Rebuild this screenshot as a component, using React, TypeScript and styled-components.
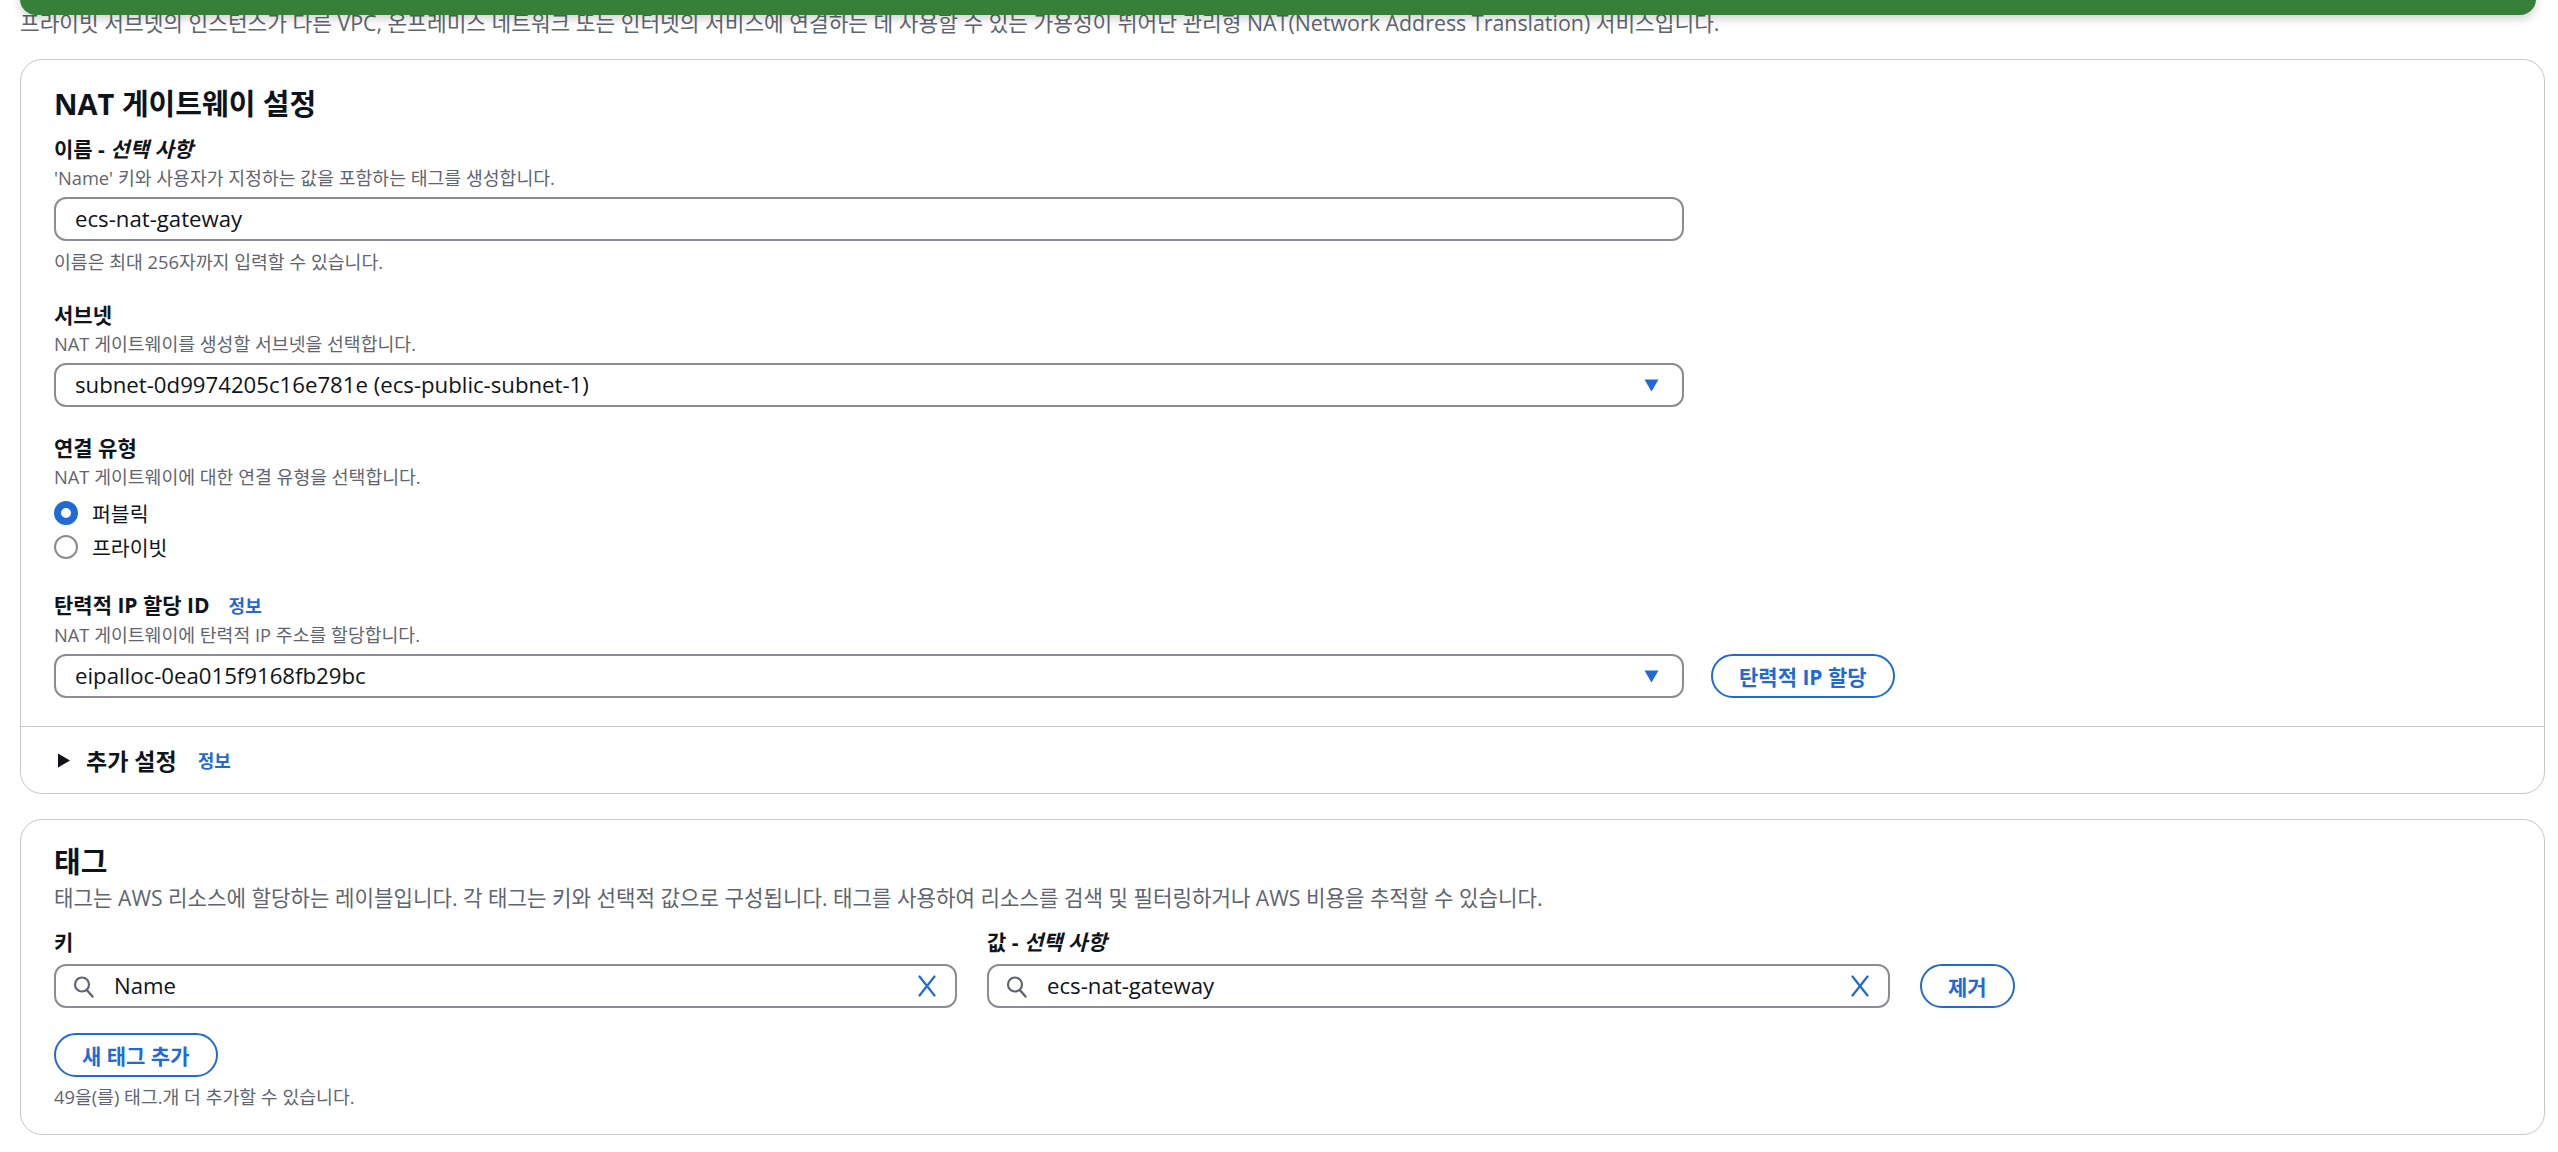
import React from "react";
import styled, { createGlobalStyle } from "styled-components";

const BLUE = "#1f6ad6";
const TEXT = "#0f141a";
const MUTED = "#5f6570";
const BORDER = "#8c8c94";
const LINE = "#c6c6cd";

const Global = createGlobalStyle`
  html, body { margin: 0; padding: 0; background: #ffffff; }
  body {
    font-family: "Open Sans", "Noto Sans CJK KR", sans-serif;
    color: ${TEXT};
  }
  * { box-sizing: border-box; }
`;

const Page = styled.div`
  position: relative;
  width: 2558px;
  height: 1152px;
  overflow: hidden;
  padding: 9px 13px 0 20px;
`;

const FlashBar = styled.div`
  position: absolute;
  top: -40px;
  left: 20px;
  right: 22px;
  height: 55px;
  background: #37803a;
  border-radius: 16px;
  box-shadow: 0 4px 10px rgba(0, 0, 0, 0.18);
`;

const PageDescription = styled.p`
  margin: 0;
  font-size: 21.4px;
  line-height: 28px;
  color: ${MUTED};
  white-space: nowrap;
`;

const Card = styled.section<{ $gap: number }>`
  margin-top: ${(p) => p.$gap}px;
  border: 1px solid ${LINE};
  border-radius: 22px;
  background: #fff;
  overflow: hidden;
`;

const CardBody = styled.div<{ $top: number; $bottom: number }>`
  padding: ${(p) => p.$top}px 33px ${(p) => p.$bottom}px 33px;
`;

const CardTitle = styled.h2`
  margin: 0;
  font-size: 29px;
  line-height: 34px;
  font-weight: 700;
  color: ${TEXT};
`;

const FieldStack = styled.div`
  margin-top: 15px;
  display: flex;
  flex-direction: column;
  gap: 28px;
`;

const Field = styled.div`
  display: flex;
  flex-direction: column;
`;

const Label = styled.div`
  display: flex;
  align-items: baseline;
  gap: 19px;
  font-size: 21px;
  line-height: 26px;
  font-weight: 700;
  color: ${TEXT};
  white-space: nowrap;
`;

const Optional = styled.i`
  font-style: italic;
`;

const InfoLink = styled.span`
  font-size: 18px;
  font-weight: 700;
  color: ${BLUE};
`;

const Description = styled.div`
  margin-top: 4px;
  font-size: 18.3px;
  line-height: 24px;
  color: ${MUTED};
  white-space: nowrap;
`;

const Constraint = styled.div`
  margin-top: 9px;
  font-size: 18.3px;
  line-height: 24px;
  color: ${MUTED};
`;

const ControlRow = styled.div`
  margin-top: 7px;
  display: flex;
  align-items: center;
  gap: 27px;
`;

const Box = styled.div<{ $width?: number }>`
  width: ${(p) => (p.$width ? `${p.$width}px` : "100%")};
  height: 44px;
  border: 2px solid ${BORDER};
  border-radius: 12px;
  background: #fff;
  display: flex;
  align-items: center;
  padding: 0 17px 0 19px;
`;

const SelectBox = styled(Box)`
  padding-right: 23px;
`;

const SearchBox = styled(Box)`
  padding-left: 17px;
  gap: 20px;
`;

const BoxValue = styled.span`
  flex: 1;
  font-family: "Open Sans", "Noto Sans CJK KR", sans-serif;
  font-size: 22.2px;
  line-height: 30px;
  color: ${TEXT};
  white-space: nowrap;
  overflow: hidden;
`;

const RadioGroup = styled.div`
  margin-top: 7px;
  display: flex;
  flex-direction: column;
`;

const RadioRow = styled.label`
  height: 34px;
  display: flex;
  align-items: center;
  gap: 14px;
  font-size: 20.5px;
  color: ${TEXT};
`;

const RadioDot = styled.span<{ $checked?: boolean }>`
  width: 24px;
  height: 24px;
  border-radius: 50%;
  flex: none;
  border: ${(p) => (p.$checked ? `7.5px solid ${BLUE}` : `2.5px solid ${BORDER}`)};
  background: #fff;
`;

const OutlineButton = styled.button`
  height: 44px;
  padding: 0 26px;
  border: 2px solid ${BLUE};
  border-radius: 22px;
  background: #fff;
  color: ${BLUE};
  font-family: "Open Sans", "Noto Sans CJK KR", sans-serif;
  font-size: 21px;
  font-weight: 700;
  white-space: nowrap;
  display: inline-flex;
  align-items: center;
  cursor: pointer;
`;

const Divider = styled.hr`
  margin: 0;
  border: 0;
  border-top: 1px solid ${LINE};
`;

const ExpandHeader = styled.div`
  height: 66px;
  padding-left: 36px;
  display: flex;
  align-items: center;
`;

const ExpandTitle = styled.span`
  margin-left: 15px;
  font-size: 23px;
  font-weight: 700;
  color: ${TEXT};
`;

const ExpandInfo = styled(InfoLink)`
  margin-left: 21px;
`;

const HeaderDescription = styled.p`
  margin: 5px 0 0 0;
  font-size: 21.2px;
  line-height: 28px;
  color: ${MUTED};
  white-space: nowrap;
`;

const TagGrid = styled.div`
  margin-top: 17px;
  display: grid;
  grid-template-columns: 903px 903px auto;
  column-gap: 30px;
  row-gap: 9px;
  justify-content: start;
  align-items: center;
`;

const TagFooter = styled.div`
  margin-top: 25px;
  display: flex;
  flex-direction: column;
  align-items: flex-start;
`;

const FooterNote = styled.div`
  margin-top: 8px;
  font-size: 18.3px;
  line-height: 24px;
  color: ${MUTED};
`;

const Caret = () => (
  <svg width="15" height="13" viewBox="0 0 15 13" aria-hidden="true">
    <path d="M0.5 0.5 H14.5 L7.5 12.5 Z" fill={BLUE} />
  </svg>
);

const ExpandCaret = () => (
  <svg width="14" height="15" viewBox="0 0 14 15" aria-hidden="true">
    <path d="M1 0.5 L13 7.5 L1 14.5 Z" fill={TEXT} />
  </svg>
);

const SearchIcon = () => (
  <svg width="21" height="23" viewBox="0 0 21 23" fill="none" aria-hidden="true">
    <circle cx="9" cy="9.5" r="7" stroke="#5f6570" strokeWidth="2.2" />
    <path d="M13.8 15 L19.5 21.5" stroke="#5f6570" strokeWidth="2.4" strokeLinecap="round" />
  </svg>
);

const ClearIcon = () => (
  <svg width="22" height="22" viewBox="0 0 22 22" fill="none" aria-hidden="true">
    <path d="M3.5 1.5 L18.5 20.5 M18.5 1.5 L3.5 20.5" stroke={BLUE} strokeWidth="2.2" strokeLinecap="round" />
  </svg>
);

export default function App() {
  return (
    <>
      <Global />
      <Page>
        <FlashBar />
        <PageDescription>
          프라이빗 서브넷의 인스턴스가 다른 VPC, 온프레미스 네트워크 또는 인터넷의 서비스에 연결하는 데 사용할 수 있는 가용성이 뛰어난 관리형 NAT(Network Address Translation) 서비스입니다.
        </PageDescription>

        <Card $gap={22}>
          <CardBody $top={27} $bottom={28}>
            <CardTitle>NAT 게이트웨이 설정</CardTitle>
            <FieldStack>
              <Field>
                <Label>
                  <span>
                    이름 - <Optional>선택 사항</Optional>
                  </span>
                </Label>
                <Description>'Name' 키와 사용자가 지정하는 값을 포함하는 태그를 생성합니다.</Description>
                <ControlRow>
                  <Box $width={1630}>
                    <BoxValue>ecs-nat-gateway</BoxValue>
                  </Box>
                </ControlRow>
                <Constraint>이름은 최대 256자까지 입력할 수 있습니다.</Constraint>
              </Field>

              <Field>
                <Label>서브넷</Label>
                <Description>NAT 게이트웨이를 생성할 서브넷을 선택합니다.</Description>
                <ControlRow>
                  <SelectBox $width={1630}>
                    <BoxValue>subnet-0d9974205c16e781e (ecs-public-subnet-1)</BoxValue>
                    <Caret />
                  </SelectBox>
                </ControlRow>
              </Field>

              <Field>
                <Label>연결 유형</Label>
                <Description>NAT 게이트웨이에 대한 연결 유형을 선택합니다.</Description>
                <RadioGroup>
                  <RadioRow>
                    <RadioDot $checked />
                    퍼블릭
                  </RadioRow>
                  <RadioRow>
                    <RadioDot />
                    프라이빗
                  </RadioRow>
                </RadioGroup>
              </Field>

              <Field>
                <Label>
                  탄력적 IP 할당 ID
                  <InfoLink>정보</InfoLink>
                </Label>
                <Description>NAT 게이트웨이에 탄력적 IP 주소를 할당합니다.</Description>
                <ControlRow>
                  <SelectBox $width={1630}>
                    <BoxValue>eipalloc-0ea015f9168fb29bc</BoxValue>
                    <Caret />
                  </SelectBox>
                  <OutlineButton>탄력적 IP 할당</OutlineButton>
                </ControlRow>
              </Field>
            </FieldStack>
          </CardBody>
          <Divider />
          <ExpandHeader>
            <ExpandCaret />
            <ExpandTitle>추가 설정</ExpandTitle>
            <ExpandInfo>정보</ExpandInfo>
          </ExpandHeader>
        </Card>

        <Card $gap={25}>
          <CardBody $top={25} $bottom={25}>
            <CardTitle>태그</CardTitle>
            <HeaderDescription>
              태그는 AWS 리소스에 할당하는 레이블입니다. 각 태그는 키와 선택적 값으로 구성됩니다. 태그를 사용하여 리소스를 검색 및 필터링하거나 AWS 비용을 추적할 수 있습니다.
            </HeaderDescription>
            <TagGrid>
              <Label>키</Label>
              <Label>
                <span>
                  값 - <Optional>선택 사항</Optional>
                </span>
              </Label>
              <span />
              <SearchBox>
                <SearchIcon />
                <BoxValue>Name</BoxValue>
                <ClearIcon />
              </SearchBox>
              <SearchBox>
                <SearchIcon />
                <BoxValue>ecs-nat-gateway</BoxValue>
                <ClearIcon />
              </SearchBox>
              <OutlineButton>제거</OutlineButton>
            </TagGrid>
            <TagFooter>
              <OutlineButton>새 태그 추가</OutlineButton>
              <FooterNote>49을(를) 태그.개 더 추가할 수 있습니다.</FooterNote>
            </TagFooter>
          </CardBody>
        </Card>
      </Page>
    </>
  );
}
